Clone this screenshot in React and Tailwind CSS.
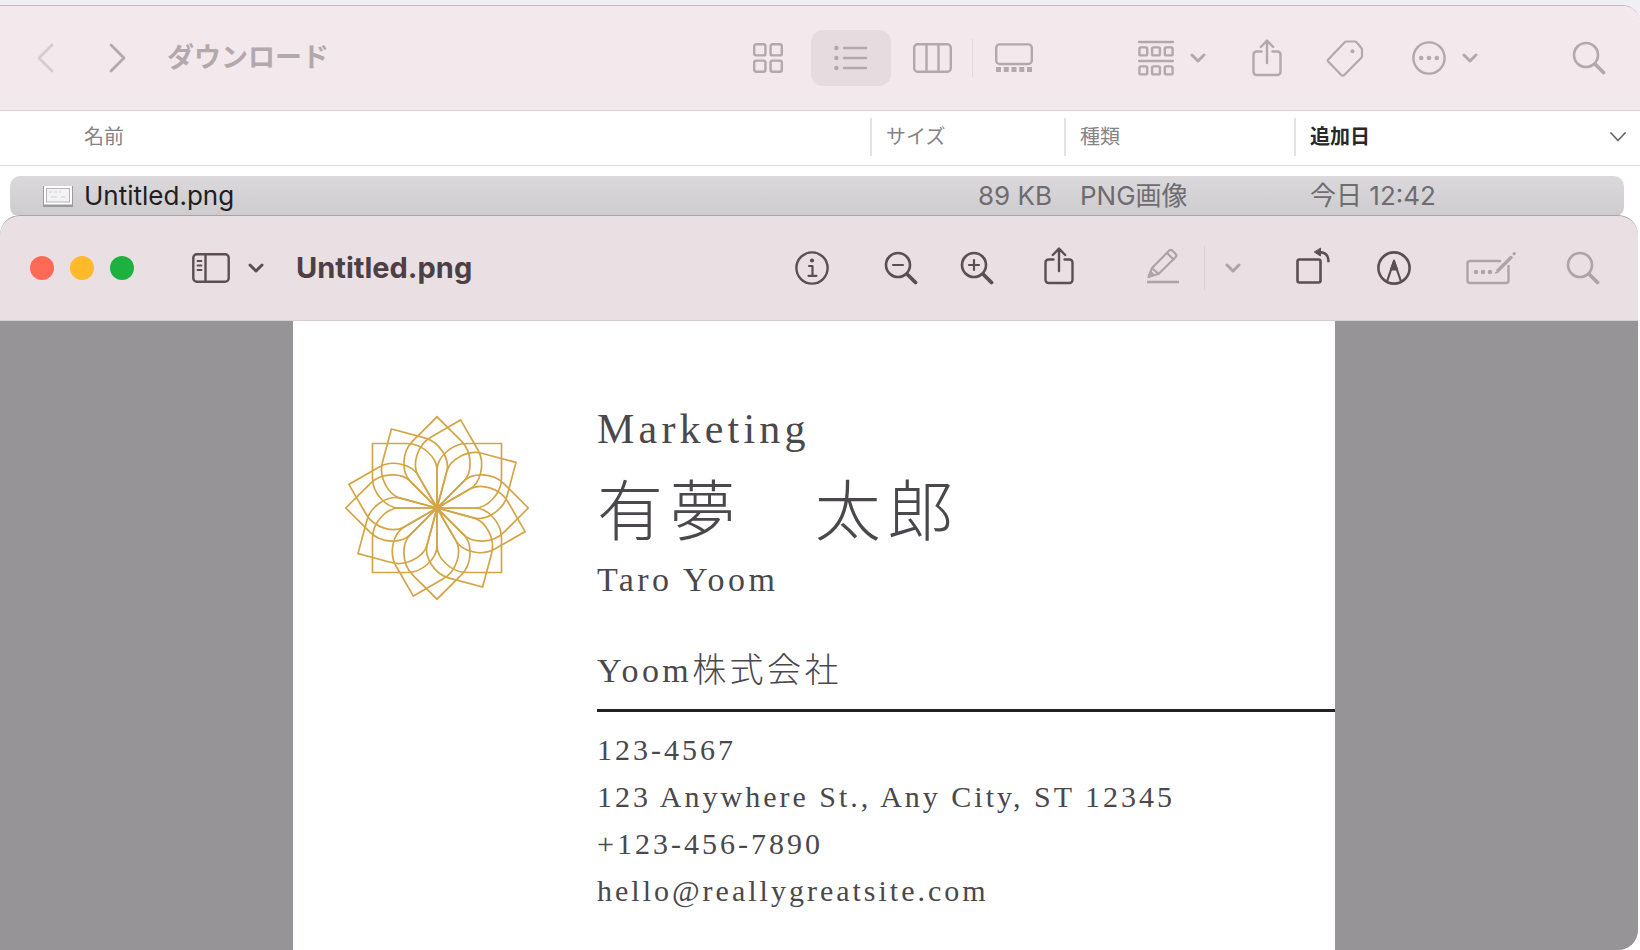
import React from 'react';

const Icon = ({ w, h, sw = 2.4, children }) => (
  <svg
    width={w}
    height={h}
    viewBox={`0 0 ${w} ${h}`}
    fill="none"
    stroke="currentColor"
    strokeWidth={sw}
    strokeLinecap="round"
    strokeLinejoin="round"
    className="block shrink-0"
    aria-hidden="true"
  >
    {children}
  </svg>
);

const ChevronDown = () => (
  <Icon w={16} h={10} sw={3}>
    <path d="M2 2l6 6 6-6" />
  </Icon>
);

const GridIcon = () => (
  <Icon w={30} h={30}>
    <rect x="1.2" y="1.2" width="11.2" height="11.2" rx="2" />
    <rect x="17.6" y="1.2" width="11.2" height="11.2" rx="2" />
    <rect x="1.2" y="17.6" width="11.2" height="11.2" rx="2" />
    <rect x="17.6" y="17.6" width="11.2" height="11.2" rx="2" />
  </Icon>
);

const ListIcon = () => (
  <Icon w={34} h={26}>
    <path d="M10 3h22M10 13h22M10 23h22" />
    <g fill="currentColor" stroke="none">
      <circle cx="2.4" cy="3" r="2.2" />
      <circle cx="2.4" cy="13" r="2.2" />
      <circle cx="2.4" cy="23" r="2.2" />
    </g>
  </Icon>
);

const ColumnsIcon = () => (
  <Icon w={39} h={30}>
    <rect x="1.2" y="1.2" width="36.6" height="27.6" rx="3.5" />
    <path d="M13.5 1.5v27M25.5 1.5v27" />
  </Icon>
);

const GalleryIcon = () => (
  <Icon w={38} h={30}>
    <rect x="1.2" y="1.4" width="35.6" height="19.6" rx="3.5" />
    <path d="M1 26.5h36" strokeWidth="5" strokeLinecap="butt" strokeDasharray="5 2.75" />
  </Icon>
);

const GroupIcon = () => (
  <Icon w={36} h={36}>
    <path d="M1 2h34M1 21h34" />
    {[1.4, 14.1, 26.8].map((x) => (
      <React.Fragment key={x}>
        <rect x={x} y="7.4" width="7.8" height="8" rx="1.5" />
        <rect x={x} y="26.4" width="7.8" height="8" rx="1.5" />
      </React.Fragment>
    ))}
  </Icon>
);

const ShareIcon = () => (
  <Icon w={30} h={38}>
    <path d="M9.5 12.5h-5a3 3 0 0 0-3 3V33a3 3 0 0 0 3 3h21a3 3 0 0 0 3-3V15.5a3 3 0 0 0-3-3h-5" />
    <path d="M15 24V2M8.8 8L15 1.6 21.2 8" />
  </Icon>
);

const TagIcon = () => (
  <Icon w={38} h={38} sw={2.2}>
    <path d="M20.5 2.5h8a3 3 0 0 1 2.2 1L35 8.5a3 3 0 0 1 1 2.2V17a3 3 0 0 1-.9 2L18.5 35.8a2.5 2.5 0 0 1-3.5 0L2.2 22.5a1.5 1.5 0 0 1 0-2L18.5 3.4a3 3 0 0 1 2-.9z" />
    <circle cx="26.5" cy="12.3" r="2" fill="currentColor" stroke="none" />
  </Icon>
);

const MoreIcon = () => (
  <Icon w={34} h={34}>
    <circle cx="17" cy="17" r="15.6" />
    <g fill="currentColor" stroke="none">
      <circle cx="9.2" cy="17" r="2.3" />
      <circle cx="17" cy="17" r="2.3" />
      <circle cx="24.8" cy="17" r="2.3" />
    </g>
  </Icon>
);

const SearchIcon = ({ sign }) => (
  <Icon w={34} h={34}>
    <circle cx="14" cy="14" r="12" strokeWidth="2.6" />
    <path d="M23.5 23.5l8 8" strokeWidth="3.8" />
    {sign && <path d={sign} strokeWidth="2.2" />}
  </Icon>
);

const SidebarIcon = () => (
  <Icon w={38} h={30}>
    <rect x="1.3" y="1.3" width="35.4" height="27.4" rx="3.5" />
    <path d="M13.5 1.5v27" />
    <path d="M5.5 8h4M5.5 12.5h4M5.5 17h4" strokeWidth="1.8" />
  </Icon>
);

const InfoIcon = () => (
  <Icon w={34} h={34}>
    <circle cx="17" cy="17" r="15.6" />
    <path d="M14 15h3.5v9.5M13.5 24.8h8" strokeWidth="2.2" />
    <circle cx="17" cy="9.5" r="2.1" fill="currentColor" stroke="none" />
  </Icon>
);

const HighlightIcon = () => (
  <Icon w={34} h={36} sw={2.2}>
    <path d="M1 34h32" strokeLinecap="butt" strokeWidth="2.6" />
    <path d="M3 28.5L6 20 23 2.8a2.5 2.5 0 0 1 3.5 0l3 3a2.5 2.5 0 0 1 0 3.5L12.5 26z" />
    <path d="M6.5 20.5l5.5 5M21 5l6.5 6.5" />
    <path d="M2.5 29l2-5 3.2 3z" fill="currentColor" />
  </Icon>
);

const RotateIcon = () => (
  <Icon w={34} h={38} sw={2.6}>
    <rect x="1.5" y="12.5" width="23" height="23" rx="2" />
    <path d="M24 5.2c5.5 0 8.5 3.3 8.5 10" strokeWidth="2.4" strokeLinecap="butt" />
    <path d="M24.5 1.5v7.5l-6-3.8z" fill="currentColor" strokeWidth="1" />
  </Icon>
);

const MarkupIcon = () => (
  <Icon w={34} h={34} sw={2.6}>
    <circle cx="17" cy="17" r="15.6" />
    <path d="M10 30.5L17 10l7 20.5" strokeWidth="2.2" />
    <path d="M17 9l3.6 10h-7.2z" fill="currentColor" strokeWidth="1.2" />
  </Icon>
);

const FormIcon = () => (
  <Icon w={50} h={34} sw={2.4}>
    <path d="M34 10H4a2.5 2.5 0 0 0-2.5 2.5v17A2.5 2.5 0 0 0 4 32h36a2.5 2.5 0 0 0 2.5-2.5V15" />
    <path d="M32 19.5l13-13" strokeWidth="3.4" />
    <path d="M48 2.8l.3-.3" strokeWidth="3" />
    <path d="M29.5 22l3-1.5" strokeWidth="1.6" />
    <g fill="currentColor" stroke="none">
      <circle cx="10" cy="21" r="2.2" />
      <circle cx="17" cy="21" r="2.2" />
      <circle cx="24" cy="21" r="2.2" />
    </g>
  </Icon>
);

const FileThumb = () => (
  <svg width="30" height="22" viewBox="0 0 30 22" className="block shrink-0" aria-hidden="true">
    <rect x="0" y="1" width="30" height="21" fill="#9b9a9c" />
    <rect x="1" y="1" width="28" height="18.5" fill="#ffffff" />
    <rect x="3.5" y="3.5" width="23" height="13.5" fill="#f3f2f4" stroke="#b5b4b7" />
    <path d="M6 7h3M11 7h3M16 7h2M8 12h6M18 12h4" stroke="#dddce0" strokeWidth="1.5" />
  </svg>
);

const PETAL_ANGLES = [0, 15, 45, 60, 90, 105, 135, 150, 180, 195, 225, 240, 270, 285, 315, 330];

const FlowerLogo = () => (
  <svg width="186" height="186" viewBox="-93 -93 186 186" className="block" role="img" aria-label="logo">
    <g fill="none" stroke="#d3a546" strokeWidth="1.7">
      {PETAL_ANGLES.map((angle) => (
        <path
          key={angle}
          d="M0 0V-38C0 -50 14 -64.5 30 -64.5H64.5V-30C64.5 -14 50 0 38 0Z"
          transform={`rotate(${angle - 45})`}
        />
      ))}
    </g>
  </svg>
);

const ToolButton = ({ label, className = '', children }) => (
  <button type="button" aria-label={label} className={`flex shrink-0 items-center justify-center ${className}`}>
    {children}
  </button>
);

function FinderToolbar() {
  return (
    <header className="flex h-[105px] items-center border-b border-[#dcd6d9] bg-[#f3e8eb] pr-[34px] pb-px pl-9 text-[#b3a8ab]">
      <ToolButton label="戻る" className="text-[#d8cccf]">
        <Icon w={18} h={30} sw={2.8}>
          <path d="M16 2L3 15l13 13" />
        </Icon>
      </ToolButton>
      <ToolButton label="進む" className="ml-[55px]">
        <Icon w={18} h={30} sw={2.8}>
          <path d="M2 2l13 13L2 28" />
        </Icon>
      </ToolButton>
      <h1 className="ml-10 text-[27px] leading-8 font-bold whitespace-nowrap">ダウンロード</h1>
      <div className="ml-auto flex items-center">
        <ToolButton label="アイコン">
          <GridIcon />
        </ToolButton>
        <ToolButton label="リスト" className="ml-7 h-14 w-20 rounded-xl bg-[#e6dbdf]">
          <ListIcon />
        </ToolButton>
        <ToolButton label="カラム" className="ml-[22px]">
          <ColumnsIcon />
        </ToolButton>
        <div className="ml-5 h-[38px] w-px bg-[#e3d8db]" />
        <ToolButton label="ギャラリー" className="ml-[22px]">
          <GalleryIcon />
        </ToolButton>
        <ToolButton label="グループ分け" className="ml-[105px] gap-4">
          <GroupIcon />
          <ChevronDown />
        </ToolButton>
        <ToolButton label="共有" className="ml-[46px]">
          <ShareIcon />
        </ToolButton>
        <ToolButton label="タグ" className="ml-11">
          <TagIcon />
        </ToolButton>
        <ToolButton label="その他" className="ml-12 gap-4">
          <MoreIcon />
          <ChevronDown />
        </ToolButton>
        <ToolButton label="検索" className="ml-[94px]">
          <SearchIcon />
        </ToolButton>
      </div>
    </header>
  );
}

function FileTable() {
  return (
    <table className="w-full table-fixed border-collapse text-left">
      <colgroup>
        <col />
        <col className="w-[194px]" />
        <col className="w-[230px]" />
        <col className="w-[346px]" />
      </colgroup>
      <thead className="text-xl text-[#858387]">
        <tr className="h-[54px] border-b border-[#dddbde]">
          <th className="pb-px pl-[84px] font-normal">名前</th>
          <th className="pb-px font-normal">
            <div className="flex h-[38px] items-center border-l-2 border-[#e4e2e5] pl-[14px]">サイズ</div>
          </th>
          <th className="pb-px font-normal">
            <div className="flex h-[38px] items-center border-l-2 border-[#e4e2e5] pl-[14px]">種類</div>
          </th>
          <th className="pb-px font-bold text-[#29282a]">
            <div className="flex h-[38px] items-center justify-between border-l-2 border-[#e4e2e5] pr-[14px] pl-[14px]">
              追加日
              <span className="text-[#6b696d]">
                <Icon w={16} h={10} sw={1.8}>
                  <path d="M1 1l7 7.5L15 1" />
                </Icon>
              </span>
            </div>
          </th>
        </tr>
      </thead>
      <tbody className="text-[26px] leading-10 text-[#6e6c70]">
        <tr>
          <td className="pt-[10px] pl-[10px]">
            <div className="flex h-[41px] items-center gap-[11px] rounded-l-[10px] bg-linear-to-b from-[#dbd9dc] to-[#cdcbce] pl-[33px] text-[#1f1e20]">
              <FileThumb />
              Untitled.png
            </div>
          </td>
          <td className="pt-[10px]">
            <div className="h-[41px] bg-linear-to-b from-[#dbd9dc] to-[#cdcbce] pr-3 text-right">89 KB</div>
          </td>
          <td className="pt-[10px]">
            <div className="h-[41px] bg-linear-to-b from-[#dbd9dc] to-[#cdcbce] pl-4">PNG画像</div>
          </td>
          <td className="pt-[10px] pr-4">
            <div className="h-[41px] rounded-r-[10px] bg-linear-to-b from-[#dbd9dc] to-[#cdcbce] pl-4">今日 12:42</div>
          </td>
        </tr>
      </tbody>
    </table>
  );
}

function PreviewToolbar() {
  return (
    <header className="flex h-[105px] items-center border-b border-[#d6ced1] pr-[38px] pl-[30px] text-[#5c4f53]">
      <div className="flex gap-4">
        <button type="button" aria-label="閉じる" className="size-6 rounded-full bg-[#ff6a57]" />
        <button type="button" aria-label="しまう" className="size-6 rounded-full bg-[#ffba2a]" />
        <button type="button" aria-label="拡大" className="size-6 rounded-full bg-[#1fb13f]" />
      </div>
      <ToolButton label="サイドバー" className="ml-[58px] gap-[18px]">
        <SidebarIcon />
        <ChevronDown />
      </ToolButton>
      <h2 className="ml-8 text-[29px] leading-8 font-bold whitespace-nowrap text-[#4c4044]">Untitled.png</h2>
      <div className="ml-auto flex items-center">
        <ToolButton label="情報">
          <InfoIcon />
        </ToolButton>
        <ToolButton label="縮小" className="ml-[55px]">
          <SearchIcon sign="M9 14h10" />
        </ToolButton>
        <ToolButton label="拡大表示" className="ml-[42px]">
          <SearchIcon sign="M9 14h10M14 9v10" />
        </ToolButton>
        <ToolButton label="共有" className="ml-[50px] pb-1">
          <ShareIcon />
        </ToolButton>
        <ToolButton label="ハイライト" className="ml-[72px] pb-1 text-[#aea3a6]">
          <HighlightIcon />
        </ToolButton>
        <div className="ml-6 h-11 w-px bg-[#dbd1d4]" />
        <ToolButton label="ハイライトカラー" className="ml-5 text-[#aea3a6]">
          <ChevronDown />
        </ToolButton>
        <ToolButton label="回転" className="ml-[55px] pb-1">
          <RotateIcon />
        </ToolButton>
        <ToolButton label="マークアップ" className="ml-[47px]">
          <MarkupIcon />
        </ToolButton>
        <ToolButton label="フォーム入力" className="ml-[55px] text-[#aea3a6]">
          <FormIcon />
        </ToolButton>
        <ToolButton label="検索" className="ml-[50px] text-[#aea3a6]">
          <SearchIcon />
        </ToolButton>
      </div>
    </header>
  );
}

function BusinessCard() {
  return (
    <div className="flex bg-white pt-20 font-['Liberation_Serif','Noto_Sans_CJK_JP',serif] text-[#4a484c]">
      <div className="w-[304px] shrink-0 pt-[14px] pl-[51px]">
        <FlowerLogo />
      </div>
      <div className="min-w-0 flex-1 whitespace-nowrap">
        <p className="text-[42px] leading-[56px] tracking-widest">Marketing</p>
        <p className="mt-3 text-[66px] leading-[88px] font-light tracking-widest">有夢　太郎</p>
        <p className="mt-1 text-[34px] leading-[38px] tracking-widest">Taro Yoom</p>
        <p className="mt-[50px] border-b-[3px] border-[#232124] pb-4 text-[34px] leading-[44px] font-light tracking-widest">
          Yoom株式会社
        </p>
        <address className="mt-[14px] text-[30px] leading-[47px] tracking-widest not-italic">
          <p>123-4567</p>
          <p>123 Anywhere St., Any City, ST 12345</p>
          <p>+123-456-7890</p>
          <p>hello@reallygreatsite.com</p>
        </address>
      </div>
    </div>
  );
}

export default function App() {
  return (
    <div className="flex min-h-screen flex-col bg-[#f0eff3] pt-[5px] font-['Inter','Noto_Sans_CJK_JP',sans-serif]">
      <div className="flex flex-1 flex-col overflow-hidden rounded-tr-[18px] border-t border-[#c0b9be] bg-white">
        <FinderToolbar />
        <div className="h-[104px] overflow-hidden">
          <FileTable />
        </div>
        <section className="mr-[2px] flex flex-1 flex-col overflow-hidden rounded-t-[20px] rounded-br-[20px] border-t border-[#a9a4a8] bg-[#eae0e4]">
          <PreviewToolbar />
          <main className="grid flex-1 grid-cols-[293fr_1042fr_303fr] bg-[#969496]">
            <div />
            <BusinessCard />
            <div />
          </main>
        </section>
      </div>
    </div>
  );
}
